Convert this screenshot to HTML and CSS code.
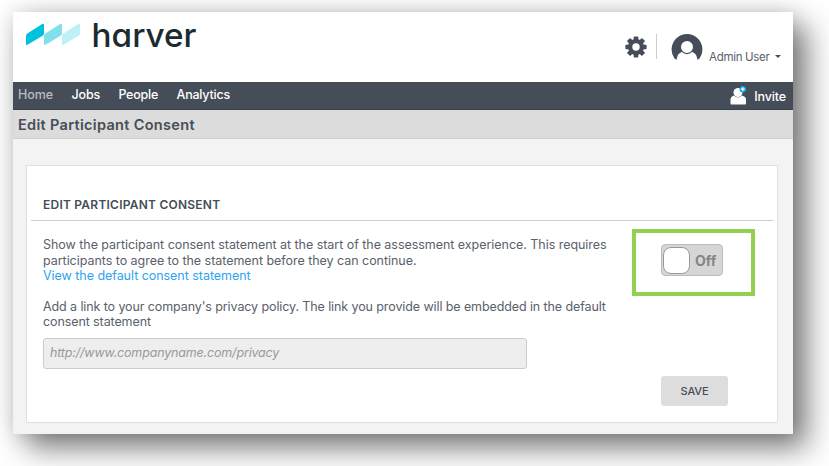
FILE: index.html
```html
<!DOCTYPE html>
<html lang="en">
<head>
    <meta charset="UTF-8">
    <meta name="viewport" content="width=device-width, initial-scale=1.0">
    <title>Edit Participant Consent</title>
    <link rel="stylesheet" href="styles.css">
</head>
<body>
    <div class="window">
        <header class="header">
            <svg class="logo" width="190" height="50" viewBox="0 0 190 50">
                <path d="M13 24 Q13 22.500 14 21.800 L29.500 11.800 Q31 11.200 31 13 V21.500 Q31 22.700 30 23.500 L14.500 32.800 Q13 33.700 13 32 Z" fill="#00c1de"/>
                <path d="M31 24 Q31 22.500 32 21.800 L47.500 11.800 Q49 11.200 49 13 V21.500 Q49 22.700 48 23.500 L32.500 32.800 Q31 33.700 31 32 Z" fill="#80e0ee"/>
                <path d="M49 24 Q49 22.500 50 21.800 L65.500 11.800 Q67 11.200 67 13 V21.500 Q67 22.700 66 23.500 L50.500 32.800 Q49 33.700 49 32 Z" fill="#bff0f7"/>
                <text class="logo-text" x="78.500" y="34.500" textLength="105" lengthAdjust="spacingAndGlyphs">harver</text>
            </svg>
            <div class="user">
                <svg class="gear" width="22" height="22" viewBox="-11 -11 22 22">
                    <g fill="#454d58">
                        <rect x="-2.300" y="-10.600" width="4.600" height="21.200" rx="0.800"/>
                        <rect x="-2.300" y="-10.600" width="4.600" height="21.200" rx="0.800" transform="rotate(45)"/>
                        <rect x="-2.300" y="-10.600" width="4.600" height="21.200" rx="0.800" transform="rotate(90)"/>
                        <rect x="-2.300" y="-10.600" width="4.600" height="21.200" rx="0.800" transform="rotate(135)"/>
                        <circle r="8"/>
                    </g>
                    <circle r="3.700" fill="#fff"/>
                </svg>
                <span class="divider"></span>
                <svg class="avatar" width="32" height="28" viewBox="0 0 32 28">
                    <path d="M3.500 25.500 A15.400 15.400 0 1 1 28.500 25.500 L26 27 H6 Z" fill="#454d58"/>
                    <path d="M5.500 28 C6 22 8 19.500 12 18.800 H20 C24 19.500 26 22 26.500 28 Z" fill="#fff"/>
                    <circle cx="16" cy="14" r="6.600" fill="#fff" stroke="#454d58" stroke-width="1.200"/>
                </svg>
                <span class="user-name">Admin User</span>
                <span class="caret"></span>
            </div>
        </header>
        <nav class="nav">
            <a class="nav-link active">Home</a>
            <a class="nav-link">Jobs</a>
            <a class="nav-link">People</a>
            <a class="nav-link">Analytics</a>
            <a class="invite">
                <svg width="17" height="20" viewBox="0 0 17 20">
                    <path d="M0.500 17.500 V13.500 Q0.500 10.500 4 9.500 Q8 13.500 12 9.500 Q16 10.500 16 13.500 V17.500 Q16 18.500 15 18.500 H1.500 Q0.500 18.500 0.500 17.500 Z" fill="#fff"/>
                    <circle cx="8" cy="6.500" r="4.500" fill="#fff"/>
                    <circle cx="12.800" cy="3.200" r="3.200" fill="#0aa5e0"/>
                    <path d="M12.800 1.200 V5.200 M10.800 3.200 H14.800" stroke="#fff" stroke-width="1.200"/>
                </svg>
                <span>Invite</span>
            </a>
        </nav>
        <h1 class="page-title">Edit Participant Consent</h1>
        <main class="card">
            <h2 class="card-title">EDIT PARTICIPANT CONSENT</h2>
            <div class="row">
                <div class="text">
                    <p class="line-1">Show the participant consent statement at the start of the assessment experience. This requires<br>participants to agree to the statement before they can continue.<br><a class="link">View the default consent statement</a></p>
                    <p class="line-2">Add a link to your company's privacy policy. The link you provide will be embedded in the default<br>consent statement</p>
                    <input class="url" type="text" placeholder="http://www.companyname.com/privacy" disabled>
                </div>
                <div class="actions">
                    <div class="highlight">
                        <div class="toggle"><span class="knob"></span><span>Off</span></div>
                    </div>
                    <button class="save">SAVE</button>
                </div>
            </div>
        </main>
    </div>
</body>
</html>
```
FILE: styles.css
```css
* {
    box-sizing: border-box;
}
body {
    margin: 0;
    padding: 12px 13px;
    height: 466px;
    overflow: hidden;
    background: #fff;
    font-family: Inter, "Liberation Sans", sans-serif;
    color: #454d58;
}
.window {
    width: 780px;
    height: 422px;
    background: #f3f3f3;
    box-shadow: 14px 14px 28px rgba(0, 0, 0, 0.5), 0 0 20px rgba(0, 0, 0, 0.15);
}
.header {
    display: flex;
    justify-content: space-between;
    height: 70px;
    background: #fff;
}
.logo-text {
    font-size: 33px;
    font-weight: 500;
    font-feature-settings: "cv11";
    fill: #1b2b30;
}
.user {
    display: flex;
    align-items: flex-start;
    padding: 21px 12px 0 0;
}
.gear {
    margin-top: 3px;
}
.divider {
    width: 1px;
    height: 25px;
    margin: 1px 14px 0 9px;
    background: #ccc;
}
.user-name {
    width: 61px;
    margin: 16px 5px 0 6px;
    font-size: 11.500px;
    letter-spacing: -0.300px;
    line-height: 16px;
    white-space: nowrap;
    color: #59616b;
}
.caret {
    margin-top: 22px;
    border-left: 3px solid transparent;
    border-right: 3px solid transparent;
    border-top: 3px solid #454d58;
}
.nav {
    display: flex;
    gap: 18.500px;
    height: 28px;
    padding: 0 7px 0 5px;
    background: #454d58;
    border-bottom: 1px solid #3b424c;
    font-size: 12.500px;
    font-weight: 500;
    letter-spacing: -0.230px;
    line-height: 25px;
    color: #fff;
}
.active {
    letter-spacing: -0.050px;
    color: #b9bcc0;
}
.invite {
    display: flex;
    gap: 7px;
    margin-left: auto;
    padding-top: 4px;
    letter-spacing: -0.150px;
    line-height: 21px;
}
.page-title {
    height: 29px;
    margin: 0;
    padding-left: 5px;
    background: #dcdcdc;
    border-bottom: 1px solid #d0d0d0;
    font-size: 14.500px;
    font-weight: 600;
    letter-spacing: 0.320px;
    line-height: 29px;
}
.card {
    width: 752px;
    height: 258px;
    margin: 26px 0 0 13px;
    padding: 0 4px;
    background: #fff;
    border: 1px solid #e0e0e0;
}
.card-title {
    height: 55px;
    margin: 0;
    padding: 31px 0 0 12px;
    border-bottom: 1px solid #ccc;
    font-size: 12px;
    font-weight: 600;
    letter-spacing: 0.230px;
    line-height: 16px;
}
.row {
    display: flex;
}
.text {
    width: 601px;
    padding: 16px 0 0 12px;
    font-size: 12.500px;
    letter-spacing: -0.040px;
    line-height: 15.500px;
    white-space: nowrap;
    color: #59616b;
}
.text p {
    margin: 0 0 15px;
}
.text .line-2 {
    margin-bottom: 8px;
    letter-spacing: -0.100px;
}
.link {
    color: #2ea3f2;
}
.url {
    display: block;
    width: 484px;
    height: 31px;
    padding: 0 6px 2px;
    background: #eee;
    border: 1px solid #ccc;
    border-radius: 3px;
    font-family: inherit;
    font-size: 12.500px;
    font-style: italic;
    letter-spacing: -0.170px;
}
.url::placeholder {
    color: #999;
}
.highlight {
    width: 123px;
    height: 67px;
    margin-top: 8px;
    padding: 11px 0 0 25px;
    border: 4px solid #92d050;
}
.toggle {
    display: flex;
    align-items: center;
    width: 62px;
    height: 32px;
    padding-left: 1px;
    background: #d6d6d6;
    border: 1px solid #bbb;
    border-radius: 4px;
    font-size: 14px;
    font-weight: 700;
    color: #858585;
}
.knob {
    width: 27px;
    height: 27px;
    margin-right: 5px;
    background: #fff;
    border: 1px solid #999;
    border-radius: 8px;
}
.save {
    width: 67px;
    height: 30px;
    margin: 80px 0 0 29px;
    background: #ddd;
    border: none;
    border-radius: 3px;
    font-family: inherit;
    font-size: 11px;
    font-weight: 500;
    letter-spacing: -0.100px;
    color: #454d58;
}
```
